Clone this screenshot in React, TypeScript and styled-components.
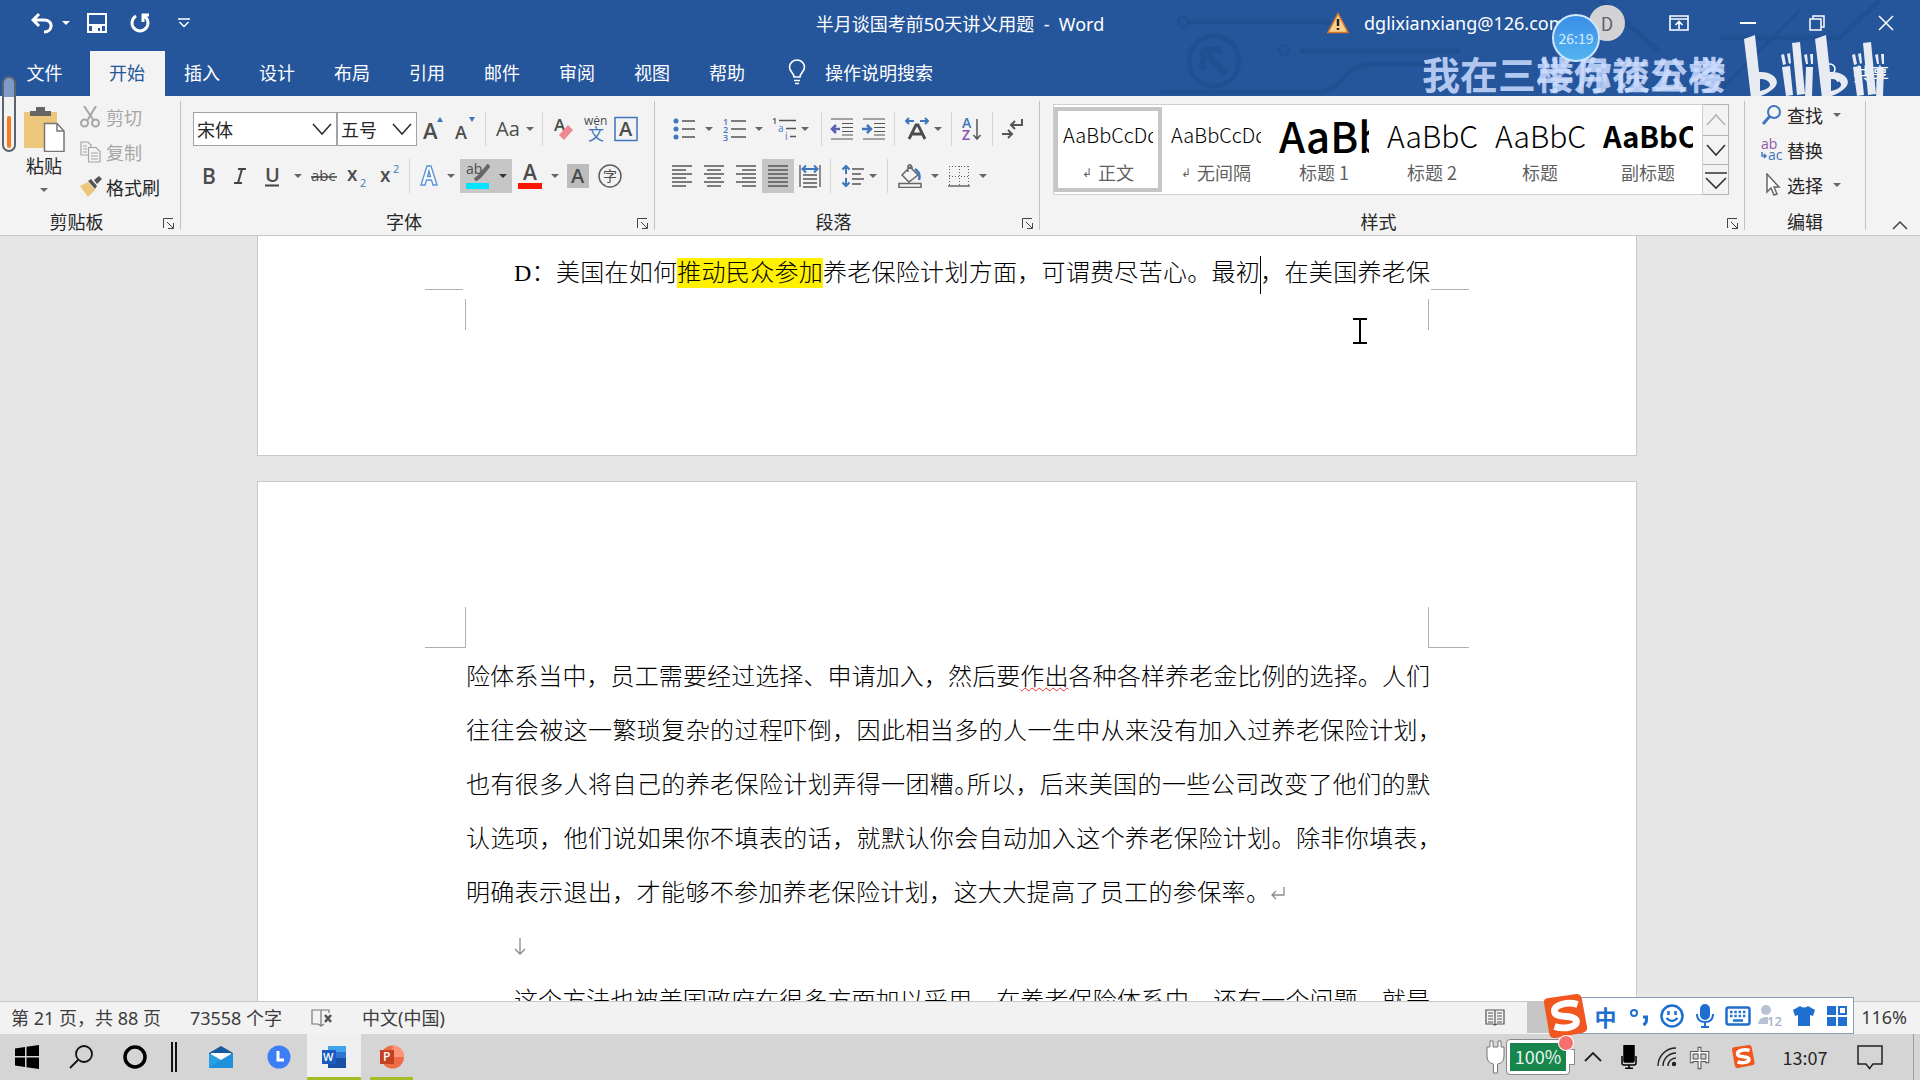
import React from "react";
import styled, { createGlobalStyle, css } from "styled-components";

const ui = `"Noto Sans", "Noto Sans CJK SC", sans-serif`;
const cjk = `"Noto Sans CJK SC", sans-serif`;
const blue = "#25569c";
const ink = "#262626";
const dim = "#5f5f5f";
const accent = "#3f76bd";

const Global = createGlobalStyle`
  * { box-sizing: border-box; }
  body { margin: 0; font-family: ${cjk}; font-size: 18px; color: ${ink}; overflow: hidden; }
  button, select { font: inherit; color: inherit; background: none; border: 0; padding: 0; margin: 0; }
  svg { display: block; flex: none; }
`;

const Window = styled.div`
  position: relative;
  display: grid;
  grid-template-rows: auto auto 1fr auto auto;
  height: 100vh;
`;

/* ---------- header ---------- */

const Header = styled.header`
  position: relative;
  background: ${blue};
  color: #fff;
  overflow: hidden;
`;
const Circuit = styled.svg`
  position: absolute;
  top: 0;
  right: 0;
`;
const TitleRow = styled.div`
  position: relative;
  display: grid;
  grid-template-columns: 1fr auto 1fr;
  align-items: center;
  height: 46px;
`;
const QuickAccess = styled.div`
  display: flex;
  align-items: center;
  padding-left: 28px;
`;
const QuickButton = styled.button<{ $w: number }>`
  width: ${(p) => p.$w}px;
  height: 40px;
  display: grid;
  place-items: center;
`;
const DocTitle = styled.h1`
  margin: 0;
  font-family: ${ui};
  font-size: 18px;
  font-weight: 400;
  white-space: pre;
`;
const Account = styled.div`
  display: flex;
  align-items: center;
  justify-content: flex-end;
`;
const Email = styled.a`
  width: 225px;
  margin-left: 15px;
  font-family: ${ui};
  color: #fff;
  text-decoration: none;
  white-space: nowrap;
`;
const Avatar = styled.button`
  width: 36px;
  height: 36px;
  margin-right: 19px;
  border-radius: 50%;
  background: #d3d2d4;
  color: #5b6270;
`;
const CaptionButton = styled.button`
  width: 69px;
  height: 40px;
  display: grid;
  place-items: center;
`;
const TabRow = styled.nav`
  position: relative;
  display: flex;
  align-items: flex-end;
  height: 50px;
`;
const Tab = styled.button<{ $active?: boolean; $first?: boolean }>`
  width: ${(p) => (p.$first ? 90 : 75)}px;
  height: 45px;
  padding: 0 1px 4px 0;
  ${(p) => p.$active && css`background: #f3f3f3; color: ${blue};`}
`;
const TellMe = styled.button`
  display: flex;
  align-items: center;
  gap: 19px;
  height: 45px;
  padding-bottom: 4px;
  margin-left: 23px;
`;
const Share = styled.button`
  display: flex;
  align-items: center;
  gap: 14px;
  height: 45px;
  padding-bottom: 2px;
  margin-left: auto;
  margin-right: 31px;
`;
const Watermark = styled.div`
  position: absolute;
  right: 194px;
  top: 46px;
  display: grid;
  justify-items: end;
  font-size: 38px;
  line-height: 54px;
  font-weight: 700;
  color: rgba(205, 221, 255, 0.85);
  span { grid-area: 1 / 1; }
`;
const Logo = styled.svg`
  position: absolute;
  right: 30px;
  top: 34px;
`;
const TimeBubble = styled.div`
  position: absolute;
  right: 320px;
  top: 14px;
  width: 48px;
  height: 48px;
  display: grid;
  place-items: center;
  border: 2px solid #cfe8fb;
  border-radius: 50%;
  background: linear-gradient(#3b8de6, #53b4f2);
  font-size: 14px;
  color: #d5edff;
`;

/* ---------- ribbon ---------- */

const Ribbon = styled.section`
  display: flex;
  height: 140px;
  background: #f3f3f3;
  border-bottom: 1px solid #c8c8c8;
`;
const Divider = styled.div`
  width: 1px;
  margin: 5px 0;
  background: #c2c2c2;
`;
const Group = styled.div<{ $w?: number }>`
  display: flex;
  flex-direction: column;
  justify-content: space-between;
  ${(p) => (p.$w ? css`width: ${p.$w}px;` : css`flex: 1;`)}
`;
const GroupFooter = styled.div`
  display: flex;
  align-items: center;
  height: 27px;
`;
const GroupLabel = styled.span`
  flex: 1;
  padding-bottom: 2px;
  text-align: center;
`;
const LauncherButton = styled.button`
  width: 27px;
  height: 27px;
  padding: 4px 0 0 10px;
`;
const Rows = styled.div<{ $pad: number }>`
  display: flex;
  flex-direction: column;
  gap: 13px;
  padding: 16px 0 0 ${(p) => p.$pad}px;
`;
const Row = styled.div`
  display: flex;
  height: 34px;
`;
const Tool = styled.button<{ $w?: number; $on?: boolean }>`
  width: ${(p) => p.$w ?? 32}px;
  height: 34px;
  display: grid;
  place-items: center;
  ${(p) => p.$on && css`background: #c6c6c6;`}
`;
const SplitTool = styled.button<{ $w: number; $gap?: number; $on?: boolean }>`
  width: ${(p) => p.$w}px;
  height: 34px;
  display: flex;
  align-items: center;
  gap: ${(p) => p.$gap ?? 9}px;
  padding-left: 6px;
  ${(p) => p.$on && css`background: #c6c6c6;`}
`;
const Sep = styled.div`
  width: 1px;
  margin: 0 4px;
  background: #d4d4d4;
`;
const Combo = styled.div<{ $w: number }>`
  position: relative;
  width: ${(p) => p.$w}px;
  margin-right: -1px;
  border: 1px solid #a3a3a3;
  background: #fff;
  select {
    width: 100%;
    height: 100%;
    padding-left: 3px;
    appearance: none;
  }
  svg {
    position: absolute;
    right: 4px;
    top: 9px;
    pointer-events: none;
  }
`;
const ComboGap = styled.div`
  width: 1px;
`;
const ClipboardBody = styled.div`
  display: flex;
  padding: 4px 0 0 13px;
`;
const PasteButton = styled.button`
  display: flex;
  flex-direction: column;
  align-items: center;
  width: 62px;
  padding: 6px 0 0 0;
  line-height: 26px;
  svg + span { margin-bottom: 10px; }
`;
const Stack = styled.div<{ $pad?: number }>`
  display: flex;
  flex-direction: column;
  padding-left: ${(p) => p.$pad ?? 0}px;
`;
const LabelTool = styled.button<{ $off?: boolean }>`
  display: flex;
  align-items: center;
  gap: 4px;
  height: 35px;
  padding-bottom: 2px;
  color: ${(p) => (p.$off ? "#a6a6a6" : ink)};
  span { margin-right: 6px; }
`;
const EditBody = styled.div`
  padding: 2px 0 0 16px;
`;
const GalleryWrap = styled.div`
  display: flex;
  height: 99px;
  padding: 8px 15px 0 13px;
`;
const Gallery = styled.div`
  display: flex;
  flex: 1;
  border: 1px solid #cfcfcf;
  background: #fff;
`;
const StyleCard = styled.button<{ $on?: boolean }>`
  display: flex;
  flex-direction: column;
  align-items: center;
  justify-content: space-between;
  width: 108px;
  margin: 2px 0;
  padding: 2px 5px 1px;
  border: 4px solid ${(p) => (p.$on ? "#c6c6c6" : "transparent")};
  color: ${dim};
`;
const Preview = styled.span<{ $size: number; $weight: number }>`
  width: 90px;
  height: 48px;
  line-height: 44px;
  overflow: hidden;
  text-align: left;
  white-space: nowrap;
  color: #000;
  font-size: ${(p) => p.$size}px;
  font-weight: ${(p) => p.$weight};
`;
const CardName = styled.span`
  display: flex;
  gap: 6px;
  line-height: 30px;
  white-space: nowrap;
  small { font-size: 12px; }
`;
const Scrollers = styled.div`
  display: grid;
  grid-template-rows: 1fr 1fr 1fr;
  width: 26px;
  border: 1px solid #b4b4b4;
  border-left: 0;
`;
const Scroller = styled.button`
  display: grid;
  place-items: center;
  & + & { border-top: 1px solid #b4b4b4; }
`;
const Collapse = styled.div`
  display: flex;
  width: 54px;
  justify-content: center;
  align-items: flex-end;
  padding: 0 0 5px 13px;
`;

/* ---------- document ---------- */

const Canvas = styled.main`
  position: relative;
  min-height: 0;
  overflow: hidden;
  background: #e6e6e6;
  display: flex;
  flex-direction: column;
  align-items: center;
  gap: 25px;
  padding-right: 26px;
`;
const Sheet = styled.article<{ $end?: boolean }>`
  flex: none;
  width: 1380px;
  border: 1px solid #c8c8c8;
  background: #fff;
  ${(p) => p.$end && css`border-top: 0; padding: 10px 0 125px;`}
  ${(p) => !p.$end && css`padding: 125px 0 0;`}
`;
const Body = styled.div<{ $top?: number }>`
  padding: 0 206px 0 208px;
  margin-top: ${(p) => p.$top ?? 0}px;
  font-family: "Liberation Serif", ${cjk};
  font-weight: 300;
  font-size: 24px;
  line-height: 54px;
  color: #000;
`;
const Paragraph = styled.p`
  margin: 0;
`;
const Line = styled.span<{ $indent?: boolean; $measure?: number }>`
  display: block;
  white-space: nowrap;
  text-align: justify;
  text-align-last: justify;
  padding-left: ${(p) => (p.$indent ? 48 : 0)}px;
  width: ${(p) => (p.$measure ? `${p.$measure}px` : "auto")};
`;
/* punctuation set on half a body where the line is tight */
const HalfStop = styled.span`
  font-feature-settings: "halt";
`;
const LastLine = styled.span`
  display: flex;
  align-items: center;
`;
const Mark = styled.mark`
  background: #fff100;
  color: inherit;
  padding: 2px 0;
`;
const Caret = styled.i`
  display: inline-block;
  width: 1px;
  height: 38px;
  margin-right: -1px;
  vertical-align: middle;
  background: #000;
`;
const Misspelt = styled.span`
  text-decoration: underline wavy #e03030 1px;
  text-underline-offset: 2px;
`;
const BreakRow = styled.div`
  display: flex;
  align-items: center;
  height: 54px;
  padding-left: 48px;
`;
const Crops = styled.div<{ $lift?: boolean }>`
  display: flex;
  justify-content: space-between;
  padding: 0 167px;
  margin-top: ${(p) => (p.$lift ? -11 : 0)}px;
`;
const TopCrop = styled.i<{ $right?: boolean }>`
  width: 41px;
  height: 41px;
  border-bottom: 1px solid #b0b0b0;
  ${(p) => (p.$right ? css`border-left: 1px solid #b0b0b0;` : css`border-right: 1px solid #b0b0b0;`)}
`;
const BottomCrop = styled.i<{ $right?: boolean }>`
  display: flex;
  flex-direction: column;
  justify-content: space-between;
  align-items: ${(p) => (p.$right ? "flex-start" : "flex-end")};
  width: 41px;
  height: 41px;
  &::before {
    content: "";
    width: 38px;
    height: 1px;
    align-self: ${(p) => (p.$right ? "flex-end" : "flex-start")};
    background: #b0b0b0;
  }
  &::after {
    content: "";
    width: 1px;
    height: 31px;
    background: #b0b0b0;
  }
`;
const Pointer = styled.svg`
  position: absolute;
  left: 1353px;
  top: 82px;
`;
const VolumePill = styled.div`
  position: absolute;
  left: 2px;
  top: 76px;
  width: 14px;
  height: 76px;
  padding: 2px;
  display: flex;
  align-items: flex-end;
  justify-content: center;
  border: 2px solid #5d6470;
  border-radius: 7px;
  background: linear-gradient(#7f9cc8 26%, #f3f3f3 27%);
  &::after {
    content: "";
    width: 4px;
    height: 32px;
    border-radius: 2px;
    background: #f47b20;
  }
`;

/* ---------- status bar and taskbar ---------- */

const StatusBar = styled.footer`
  position: relative;
  display: flex;
  align-items: center;
  height: 33px;
  padding: 0 13px 2px 11px;
  border-top: 1px solid #c8c8c8;
  background: #f2f2f2;
  font-family: ${ui};
  color: #3c3c3c;
`;
const StatusItem = styled.button`
  margin-right: 29px;
  white-space: nowrap;
`;
const ViewButton = styled.button<{ $on?: boolean }>`
  display: grid;
  place-items: center;
  width: 64px;
  height: 32px;
  background: ${(p) => (p.$on ? "#c6c6c6" : "none")};
`;
const Zoom = styled.button`
  margin-left: 270px;
`;
const Push = styled.div`
  flex: 1;
`;
const ImeBar = styled.div`
  position: absolute;
  right: 66px;
  bottom: 0;
  display: flex;
  height: 37px;
  padding-left: 32px;
  border: 1px solid #8c9cb4;
  background: #fff;
  color: #1f6fd0;
  font-weight: 700;
  font-size: 22px;
`;
const ImeLogo = styled.svg`
  position: absolute;
  left: -15px;
  top: -4px;
`;
const ImeButton = styled.button`
  display: grid;
  place-items: center;
  width: 33px;
`;
const Taskbar = styled.div`
  display: flex;
  align-items: stretch;
  height: 46px;
  background: #d5d5d5;
`;
const Task = styled.button<{ $w: number; $running?: boolean; $front?: boolean; $gap?: number }>`
  display: grid;
  place-items: center;
  width: ${(p) => p.$w}px;
  margin-left: ${(p) => p.$gap ?? 0}px;
  border-top: 3px solid transparent;
  border-bottom: 3px solid ${(p) => (p.$running ? "#a3bd26" : "transparent")};
  background: ${(p) => (p.$front ? "#efefef" : "none")};
`;
const Bars = styled.i`
  width: 6px;
  margin: 8px 12px 8px 9px;
  border: solid #111;
  border-width: 0 2px;
`;
const Battery = styled.div`
  position: relative;
  display: flex;
  align-items: center;
  align-self: center;
  width: 68px;
`;
const BatteryBody = styled.span`
  width: 62px;
  height: 34px;
  border: 3px solid #fff;
  border-radius: 3px;
  outline: 1px solid #8a8a8a;
  background: #17854c;
  color: #e8f7ee;
  line-height: 26px;
  text-align: center;
`;
const BatteryNub = styled.i`
  width: 6px;
  height: 16px;
  border: 1px solid #8a8a8a;
  border-left: 0;
  background: #fff;
`;
const Badge = styled.i`
  position: absolute;
  right: 2px;
  top: -4px;
  width: 14px;
  height: 14px;
  border-radius: 50%;
  background: #f4706c;
  box-shadow: 0 0 0 1px #fff;
`;
const ImeState = styled.button`
  width: 23px;
  padding-bottom: 2px;
  font-size: 22px;
  font-weight: 700;
  color: #fff;
  -webkit-text-stroke: 1px #555;
`;
const DesktopEdge = styled.i`
  width: 1px;
  margin: 0 6px 0 8px;
  background: #9c9c9c;
`;

/* ---------- drawings ---------- */

type SvgProps = { w: number; h: number; c?: string; sw?: number; children: React.ReactNode };
const Svg = ({ w, h, c = dim, sw = 1.5, children }: SvgProps) => (
  <svg width={w} height={h} viewBox={`0 0 ${w} ${h}`} fill="none" stroke={c} strokeWidth={sw} aria-hidden="true">
    {children}
  </svg>
);
const Down = ({ c = "#666" }: { c?: string }) => (
  <Svg w={8} h={4} c="none"><path d="M0 0H8L4 4Z" fill={c} /></Svg>
);
const Chevron = ({ up, c = "#333", w = 20 }: { up?: boolean; c?: string; w?: number }) => (
  <Svg w={w} h={14} c={c} sw={1.6}>
    <path d={up ? `M1 12L${w / 2} 2L${w - 1} 12` : `M1 2L${w / 2} 12L${w - 1} 2`} />
  </Svg>
);
const Lines = ({ rows }: { rows: [number, number][] }) => (
  <Svg w={22} h={22} c="#555">
    {rows.map(([a, b], i) => <path key={i} d={`M${a} ${1 + i * 4}H${b}`} />)}
  </Svg>
);
const T = ({ x, y, s, f = "#4c4c4c", b, children }: { x: number; y: number; s: number; f?: string; b?: boolean; children: string }) => (
  <text x={x} y={y} fontSize={s} fill={f} stroke="none" fontWeight={b ? 600 : 400} fontFamily='"Open Sans", "Noto Sans CJK SC", sans-serif'>
    {children}
  </text>
);
const Launcher = ({ name }: { name: string }) => (
  <LauncherButton aria-label={name}>
    <Svg w={11} h={11} c="#444" sw={1}><path d="M.5 10V.5H10M4 4l6 6M10.500 5v5.500H5" /></Svg>
  </LauncherButton>
);
const Sogou = ({ s }: { s: number }) => (
  <g transform={`scale(${s / 44})`} stroke="none">
    <path d="M2 9Q1 5 5 4L33 0Q37 0 38 4L43 31Q44 36 39 37L13 42Q8 43 7 38Z" fill="#f0561d" />
    <path d="M34 10C25 7 11 10 12 17C13 24 32 19 33 26C33 32 21 34 12 31" fill="none" stroke="#fff" strokeWidth="6.500" />
  </g>
);

const tabs = ["文件", "开始", "插入", "设计", "布局", "引用", "邮件", "审阅", "视图", "帮助"];
const styleCards = [
  { name: "正文", linked: true, text: "AaBbCcDd", size: 20, weight: 300 },
  { name: "无间隔", linked: true, text: "AaBbCcDd", size: 20, weight: 300 },
  { name: "标题 1", text: "AaBb", size: 42, weight: 500 },
  { name: "标题 2", text: "AaBbC", size: 30, weight: 300 },
  { name: "标题", text: "AaBbC", size: 30, weight: 300 },
  { name: "副标题", text: "AaBbC", size: 29, weight: 700 },
];

const TitleBar = () => (
  <Header>
    <Circuit width="760" height="96" viewBox="0 0 760 96" fill="none" stroke="#1e4a87" strokeWidth="5" opacity="0.45" aria-hidden="true">
      <circle cx="23" cy="22" r="5" strokeWidth="3" /><path d="M29 22H170M140 51H300M0 92H160C190 88 175 66 215 64H330M440 0L500 52M560 38H680L720 0" />
      <circle cx="124" cy="50" r="5" strokeWidth="3" />
      <circle cx="54" cy="61" r="25" /><path d="M42 50H62M43 50V70M44 51L66 74" strokeWidth="7" />
      <path d="M560 90L640 10" strokeWidth="3" />
    </Circuit>
    <TitleRow>
      <QuickAccess>
        <QuickButton $w={28} aria-label="撤消">
          <Svg w={22} h={22} c="#fff" sw={3}><path d="M2 8H13C23 8 22 20 13 20M8 2L2 8L8 14" /></Svg>
        </QuickButton>
        <QuickButton $w={20} aria-label="撤消选项"><Down c="#fff" /></QuickButton>
        <QuickButton $w={42} aria-label="保存">
          <Svg w={20} h={20} c="#fff" sw={2}><path d="M1 1H19V19H1ZM1 12H19M6 19V14H14V19" /><path d="M7 15h3v4h-3z" fill="#fff" /></Svg>
        </QuickButton>
        <QuickButton $w={44} aria-label="重复">
          <Svg w={22} h={22} c="#fff" sw={3}><path d="M7 4A8 8 0 1 0 15 4M20 3H14V10" /></Svg>
        </QuickButton>
        <QuickButton $w={44} aria-label="自定义快速访问工具栏">
          <Svg w={12} h={10} c="#fff"><path d="M0 1H12M1.500 4L6 8.500L10.500 4" /></Svg>
        </QuickButton>
      </QuickAccess>
      <DocTitle>半月谈国考前50天讲义用题  -  Word</DocTitle>
      <Account>
        <Svg w={22} h={22} c="#d9762b" sw={1.5}>
          <path d="M11 1.500L21 20.500H1Z" fill="#f9d08a" /><path d="M11 7V14M11 16V18" stroke="#222" strokeWidth="2.500" />
        </Svg>
        <Email href="#account">dglixianxiang@126.com</Email>
        <Avatar>D</Avatar>
        <CaptionButton aria-label="功能区显示选项">
          <Svg w={20} h={16} c="#fff" sw={1.6}><path d="M1 1H19V15H1ZM1 4H19M10 14V7M6.500 10L10 6.500L13.500 10" /></Svg>
        </CaptionButton>
        <CaptionButton aria-label="最小化"><Svg w={16} h={2} c="#fff" sw={2}><path d="M0 1H16" /></Svg></CaptionButton>
        <CaptionButton aria-label="还原">
          <Svg w={16} h={16} c="#fff"><path d="M1 4H12V15H1ZM4 4V1H15V12H12" /></Svg>
        </CaptionButton>
        <CaptionButton aria-label="关闭"><Svg w={16} h={16} c="#fff"><path d="M1 1L15 15M15 1L1 15" /></Svg></CaptionButton>
      </Account>
    </TitleRow>
    <TabRow>
      {tabs.map((t, i) => <Tab key={t} $first={i === 0} $active={i === 1}>{t}</Tab>)}
      <TellMe>
        <Svg w={18} h={26} c="#fff" sw={1.6}>
          <path d="M6 18C6 14 1.500 13 1.500 8A7.500 7 0 0 1 16.500 8C16.500 13 12 14 12 18ZM6 21.500H12M7 24.500H11" />
        </Svg>
        操作说明搜索
      </TellMe>
      <Share>
        <Svg w={18} h={20} c="#fff"><circle cx="9" cy="6" r="5" /><path d="M1 19C2 13 16 13 17 19" /></Svg>
        共享
      </Share>
    </TabRow>
    <Watermark><span>我在三楼你在五楼</span><span>半月谈公考</span></Watermark>
    <Logo width="146" height="64" viewBox="0 0 146 64" fill="#e9ebf2" aria-hidden="true">
      <path d="M0 5L11 1L15 38C28 37 38 46 30 54C24 60 16 63 7 64Z M16 45V57Q27 54 26 50Q24 45 16 45Z" fillRule="evenodd" />
      <path d="M38 33L46 32L49 61L42 62ZM48 9L56 8L61 60L53 61ZM62 33L69 33L68 62L61 62Z" />
      <path d="M37 21L40 20L42 30L39 31ZM43 20L46 19L47 29L45 30ZM60 21L63 20L64 30L62 30ZM66 20L69 20L69 30L67 30Z" />
      <path d="M71 5L82 1L86 38C99 37 109 46 101 54C95 60 87 63 78 64Z M87 45V57Q98 54 97 50Q95 45 87 45Z" fillRule="evenodd" />
      <path d="M109 33L117 32L120 61L113 62ZM119 9L127 8L132 60L124 61ZM133 33L140 33L139 62L132 62Z" />
      <path d="M108 21L111 20L113 30L110 31ZM114 20L117 19L118 29L116 30ZM131 21L134 20L135 30L133 30ZM137 20L140 20L140 30L138 30Z" />
    </Logo>
    <TimeBubble>26:19</TimeBubble>
  </Header>
);

const ClipboardGroup = () => (
  <Group $w={180}>
    <ClipboardBody>
      <PasteButton>
        <Svg w={42} h={46} c="none">
          <path d="M1 6H34V42H1Z" fill="#ecc67a" /><path d="M7 5H13V1H22V5H28V10H7Z" fill="#656565" />
          <path d="M21.500 17.500H34L41 25V45.500H21.500Z" fill="#fff" stroke="#777" /><path d="M34 17.500V25H41" stroke="#777" />
        </Svg>
        <span>粘贴</span>
        <Down />
      </PasteButton>
      <Stack $pad={5}>
        <LabelTool $off disabled>
          <Svg w={22} h={22} c="#a6a6a6" sw={2}>
            <path d="M4 0L14 15M16 0L7 15" /><circle cx="4.500" cy="17" r="3.500" /><circle cx="15.500" cy="17" r="3.500" />
          </Svg>
          <span>剪切</span>
        </LabelTool>
        <LabelTool $off disabled>
          <Svg w={22} h={22} c="#a6a6a6" sw={1.2}>
            <path d="M8 14H1V1H8L11 4V6M8.500 6.500H16L20 10.500V21H8.500ZM3 5H7M3 8H7M3 11H7M11 12H18M11 15H18M11 18H18" />
          </Svg>
          <span>复制</span>
        </LabelTool>
        <LabelTool>
          <Svg w={22} h={22} c="none">
            <path d="M0 10L8 6L15 14L8 21Z" fill="#ecc67a" /><path d="M8 5L11 3L17 10L15 13Z" fill="#555" /><path d="M14 4L19 0L22 3L17 8Z" fill="#555" />
          </Svg>
          <span>格式刷</span>
        </LabelTool>
      </Stack>
    </ClipboardBody>
    <GroupFooter><GroupLabel>剪贴板</GroupLabel><Launcher name="剪贴板选项" /></GroupFooter>
  </Group>
);

const FontGroup = () => (
  <Group $w={473}>
    <Rows $pad={12}>
      <Row>
        <Combo $w={144}><select aria-label="字体"><option>宋体</option></select><Chevron /></Combo>
        <ComboGap />
        <Combo $w={80}><select aria-label="字号"><option>五号</option></select><Chevron /></Combo>
        <ComboGap />
        <Tool aria-label="增大字号"><Svg w={20} h={24}><T x={0} y={22} s={22} b>A</T><path d="M14 5L17 0L20 5Z" fill={accent} stroke="none" /></Svg></Tool>
        <Tool aria-label="减小字号"><Svg w={20} h={24}><T x={0} y={22} s={18} b>A</T><path d="M14 0L17 5L20 0Z" fill={accent} stroke="none" /></Svg></Tool>
        <Sep />
        <SplitTool $w={48} $gap={4} aria-label="更改大小写"><Svg w={26} h={22}><T x={0} y={18} s={20}>Aa</T></Svg><Down /></SplitTool>
        <Sep />
        <Tool $w={34} aria-label="清除格式">
          <Svg w={20} h={24}><T x={0} y={14} s={17} b>A</T><path d="M5 18L14 8L19 13L10 23Z" fill="#ee8895" stroke="none" /></Svg>
        </Tool>
        <Tool $w={30} aria-label="拼音指南"><Svg w={24} h={26}><T x={0} y={9} s={12}>wén</T><T x={4} y={24} s={16} f={accent}>文</T></Svg></Tool>
        <Tool $w={30} aria-label="字符边框"><Svg w={24} h={26} c={accent}><path d="M1 1.500H23V24.500H1Z" /><T x={5} y={20} s={20} b>A</T></Svg></Tool>
      </Row>
      <Row>
        <Tool aria-label="加粗"><Svg w={16} h={20}><T x={1} y={18} s={21} b>B</T></Svg></Tool>
        <Tool $w={30} aria-label="倾斜"><Svg w={14} h={20} c="#444" sw={2}><path d="M5 3H13M1 17H9M9 3L5 17" /></Svg></Tool>
        <SplitTool $w={54} aria-label="下划线"><Svg w={24} h={24} c="#444"><T x={4} y={18} s={20} b>U</T><path d="M4 21.500H18" strokeWidth="2" /></Svg><Down /></SplitTool>
        <Tool $w={30} aria-label="删除线"><Svg w={26} h={20} c="#444"><T x={0} y={15} s={15}>abc</T><path d="M0 11H26" /></Svg></Tool>
        <Tool $w={36} aria-label="下标"><Svg w={20} h={24}><T x={0} y={17} s={19} b>x</T><T x={13} y={23} s={11} f={accent}>2</T></Svg></Tool>
        <Tool $w={30} aria-label="上标"><Svg w={20} h={24}><T x={0} y={18} s={19} b>x</T><T x={13} y={9} s={11} f={accent}>2</T></Svg></Tool>
        <Sep />
        <SplitTool $w={46} aria-label="文本效果">
          <Svg w={18} h={22} c="#5b93d6" sw={1.4}><path d="M1 20L7 1H11L17 20H13L11.500 15H6.500L5 20ZM7.500 11.500H10.500L9 6Z" fill="#fff" /></Svg><Down />
        </SplitTool>
        <SplitTool $w={52} $on aria-label="文本突出显示颜色">
          <Svg w={24} h={26}><T x={0} y={11} s={14}>ab</T><path d="M23 2L14 13L9 17" stroke="#666" strokeWidth="4" /><path d="M0 20H23V26H0Z" fill="#00e5ff" stroke="none" /></Svg><Down c="#333" />
        </SplitTool>
        <SplitTool $w={50} aria-label="字体颜色">
          <Svg w={24} h={26}><T x={5} y={17} s={21} b>A</T><path d="M0 20H24V26H0Z" fill="#fd1300" stroke="none" /></Svg><Down />
        </SplitTool>
        <Tool aria-label="字符底纹"><Svg w={22} h={24}><path d="M0 0H22V24H0Z" fill="#bdbdbd" stroke="none" /><T x={4} y={19} s={20} b>A</T></Svg></Tool>
        <Tool aria-label="带圈字符"><Svg w={24} h={24}><circle cx="12" cy="12" r="11" /><T x={5} y={17} s={14}>字</T></Svg></Tool>
      </Row>
    </Rows>
    <GroupFooter><GroupLabel>字体</GroupLabel><Launcher name="字体选项" /></GroupFooter>
  </Group>
);

const Indent = ({ left }: { left?: boolean }) => (
  <Svg w={24} h={22} c="#555" sw={1.2}>
    <path d="M1 1H23M12 5.500H23M12 9.500H23M12 13.500H23M1 21H23M12 17H23" />
    <path d={left ? "M10 11H2M6 7L2 11L6 15" : "M0 11H8M5 7L9 11L5 15"} stroke={left ? "#5a5fb5" : accent} strokeWidth="2.500" />
  </Svg>
);

const ParagraphGroup = () => (
  <Group $w={384}>
    <Rows $pad={11}>
      <Row>
        <SplitTool $w={50} aria-label="项目符号">
          <Svg w={24} h={22} c="#555">
            {[3, 11, 19].map((y) => <g key={y}><circle cx="4" cy={y} r="2.500" fill={accent} stroke="none" /><path d={`M10 ${y}H23`} /></g>)}
          </Svg><Down />
        </SplitTool>
        <SplitTool $w={50} aria-label="编号">
          <Svg w={24} h={24} c="#555">
            {["1", "2", "3"].map((n, i) => <g key={n}><T x={1} y={8 + i * 8} s={9} f={accent} b>{n}</T><path d={`M9 ${4 + i * 8}H24`} /></g>)}
          </Svg><Down />
        </SplitTool>
        <SplitTool $w={51} $gap={5} aria-label="多级列表">
          <Svg w={24} h={24} c="#555">
            <T x={0} y={7} s={9} b>1</T><T x={6} y={15} s={10} f={accent}>a</T><T x={13} y={23} s={10} f={accent}>i</T><path d="M7 3.500H24M14 11.500H24M18 19.500H24" />
          </Svg><Down />
        </SplitTool>
        <Sep />
        <Tool aria-label="减少缩进量"><Indent left /></Tool>
        <Tool aria-label="增加缩进量"><Indent /></Tool>
        <Sep />
        <SplitTool $w={48} $gap={5} aria-label="中文版式">
          <Svg w={24} h={24} c={accent} sw={2}><path d="M9 4H1M4 1L1 4L4 7M15 4H23M20 1L23 4L20 7" /><path d="M4 22L11 8H13L20 22M7.500 17H16.500" stroke="#4c4c4c" strokeWidth="2.800" /></Svg><Down />
        </SplitTool>
        <Sep />
        <Tool aria-label="排序">
          <Svg w={20} h={24} c="#555"><T x={0} y={11} s={14} f={accent} b>A</T><T x={0} y={23} s={14} f="#8a4fb0" b>Z</T><path d="M15 2V22M11.500 18L15 22L18.500 18" /></Svg>
        </Tool>
        <Sep />
        <Tool aria-label="显示编辑标记"><Svg w={22} h={22} c="#555" sw={2}><path d="M20 1V7H10M13 3L9 7L13 11M0 16H9M6 12L10 16L6 20" /></Svg></Tool>
      </Row>
      <Row>
        <Tool aria-label="左对齐"><Lines rows={[[1, 21], [1, 15], [1, 21], [1, 15], [1, 21], [1, 15]]} /></Tool>
        <Tool aria-label="居中"><Lines rows={[[1, 21], [4, 18], [1, 21], [4, 18], [1, 21], [4, 18]]} /></Tool>
        <Tool aria-label="右对齐"><Lines rows={[[1, 21], [7, 21], [1, 21], [7, 21], [1, 21], [7, 21]]} /></Tool>
        <Tool $on aria-label="两端对齐"><Lines rows={[[1, 21], [1, 21], [1, 21], [1, 21], [1, 21], [1, 21]]} /></Tool>
        <Tool aria-label="分散对齐">
          <Svg w={22} h={24} c="#555" sw={1.3}><path d="M1 1V23M21 1V23M4 11H18M4 15H18M4 19H18M4 23H18" /><path d="M4 5H18M7 1.500L3.500 5L7 8.500M15 1.500L18.500 5L15 8.500" stroke={accent} strokeWidth="2" /></Svg>
        </Tool>
        <Sep />
        <SplitTool $w={48} $gap={4} aria-label="行距">
          <Svg w={24} h={24} c="#555"><path d="M11 5H23M11 10H20M11 15H23M11 20H20" /><path d="M5 2V10M1.500 5.500L5 2L8.500 5.500M5 14V22M1.500 18.500L5 22L8.500 18.500" stroke={accent} strokeWidth="2" /></Svg><Down />
        </SplitTool>
        <Sep />
        <SplitTool $w={50} aria-label="底纹">
          <Svg w={24} h={24} c="#666"><path d="M12 3L20 11L11 18L4 11ZM10 8V2Q12 -1 14 3V6M1 19.500H23V23.500H1Z" /><path d="M17 5Q23 9 21 16" stroke={accent} strokeWidth="2.500" /></Svg><Down />
        </SplitTool>
        <SplitTool $w={50} aria-label="边框">
          <Svg w={22} h={22} c="#666" sw={1}><path d="M1 1.500H21M1 11.500H21M1.500 1V20M11.500 1V20M20.500 1V20" strokeDasharray="1 2" /><path d="M0 21H22" strokeWidth="1.500" /></Svg><Down />
        </SplitTool>
      </Row>
    </Rows>
    <GroupFooter><GroupLabel>段落</GroupLabel><Launcher name="段落选项" /></GroupFooter>
  </Group>
);

const StylesGroup = () => (
  <Group>
    <GalleryWrap>
      <Gallery>
        {styleCards.map((s, i) => (
          <StyleCard key={s.name} $on={i === 0}>
            <Preview $size={s.size} $weight={s.weight}>{s.text}</Preview>
            <CardName>{s.linked && <small>↲</small>}{s.name}</CardName>
          </StyleCard>
        ))}
      </Gallery>
      <Scrollers>
        <Scroller aria-label="上一行"><Chevron up c="#b4b4b4" /></Scroller>
        <Scroller aria-label="下一行"><Chevron /></Scroller>
        <Scroller aria-label="其他样式"><Svg w={22} h={20} c="#333" sw={1.6}><path d="M0 3H22M1 8L11 18L21 8" /></Svg></Scroller>
      </Scrollers>
    </GalleryWrap>
    <GroupFooter><GroupLabel>样式</GroupLabel><Launcher name="样式选项" /></GroupFooter>
  </Group>
);

const EditGroup = () => (
  <Group $w={120}>
    <EditBody>
      <Stack>
        <LabelTool>
          <Svg w={22} h={20} c={accent} sw={2}><circle cx="13" cy="7" r="6" /><path d="M9 11L2 19" strokeWidth="3" /></Svg>
          <span>查找</span><Down />
        </LabelTool>
        <LabelTool>
          <Svg w={22} h={24} c={accent}><T x={0} y={11} s={14} f="#8a5aa8">ab</T><T x={7} y={22} s={14} f={accent}>ac</T><path d="M1 14V18H5M3 16L5 18L3 20" /></Svg>
          <span>替换</span>
        </LabelTool>
        <LabelTool>
          <Svg w={22} h={24} c="#666"><path d="M6 1V19L10 15L13 22L16 21L13 14H18Z" fill="#fff" /></Svg>
          <span>选择</span><Down />
        </LabelTool>
      </Stack>
    </EditBody>
    <GroupFooter><GroupLabel>编辑</GroupLabel></GroupFooter>
  </Group>
);

export default function App() {
  return (
    <Window>
      <Global />
      <TitleBar />
      <Ribbon>
        <ClipboardGroup />
        <Divider />
        <FontGroup />
        <Divider />
        <ParagraphGroup />
        <Divider />
        <StylesGroup />
        <Divider />
        <EditGroup />
        <Divider />
        <Collapse><button aria-label="折叠功能区"><Svg w={16} h={10} c="#444"><path d="M1 9L8 2L15 9" /></Svg></button></Collapse>
      </Ribbon>

      <Canvas>
        <Sheet $end>
          <Body>
            <Paragraph>
              <Line $indent>
                D：美国在如何<Mark>推动民众参加</Mark>养老保险计划方面，可谓费尽苦心。最初<Caret />，在美国养老保
              </Line>
            </Paragraph>
          </Body>
          <Crops $lift><BottomCrop /><BottomCrop $right /></Crops>
        </Sheet>
        <Sheet>
          <Crops><TopCrop /><TopCrop $right /></Crops>
          <Body $top={2}>
            <Paragraph>
              <Line>险体系当中，员工需要经过选择、申请加入，然后要<Misspelt>作出</Misspelt>各种各样养老金比例的选择。人们</Line>
              <Line>往往会被这一繁琐复杂的过程吓倒，因此相当多的人一生中从来没有加入过养老保险计划<HalfStop>，</HalfStop></Line>
              <Line>也有很多人将自己的养老保险计划弄得一团糟<HalfStop>。</HalfStop>所以，后来美国的一些公司改变了他们的默</Line>
              <Line>认选项，他们说如果你不填表的话，就默认你会自动加入这个养老保险计划。除非你填表<HalfStop>，</HalfStop></Line>
              <LastLine>
                <Line $measure={804}>明确表示退出，才能够不参加养老保险计划，这大大提高了员工的参保率。</Line>
                <Svg w={16} h={14} c="#8a8a8a" sw={1.3}><path d="M14 1V9H2M6 5L2 9L6 13" /></Svg>
              </LastLine>
            </Paragraph>
            <BreakRow><Svg w={12} h={18} c="#8a8a8a" sw={1.3}><path d="M6 0V16M1 11L6 16L11 11" /></Svg></BreakRow>
            <Paragraph>
              <Line $indent>这个方法也被美国政府在很多方面加以采用，在养老保险体系中，还有一个问题，就是</Line>
            </Paragraph>
          </Body>
        </Sheet>
        <Pointer width="14" height="26" viewBox="0 0 14 26" fill="none" stroke="#000" strokeWidth="2" aria-hidden="true">
          <path d="M0 1H14M0 25H14M7 1V25" />
        </Pointer>
      </Canvas>

      <StatusBar>
        <StatusItem>第 21 页，共 88 页</StatusItem>
        <StatusItem>73558 个字</StatusItem>
        <StatusItem aria-label="校对错误">
          <Svg w={22} h={20} c="#777" sw={1.2}><path d="M10 3V19M10 3H1V17H7L10 19L13 17M10 3H18V6" /><path d="M14 8L20 15M20 8L14 15" stroke="#555" strokeWidth="2.500" /></Svg>
        </StatusItem>
        <StatusItem>中文(中国)</StatusItem>
        <Push />
        <ViewButton aria-label="阅读视图">
          <Svg w={20} h={18} c="#555" sw={1.2}><path d="M10 2V17M10 2H1V16H8L10 17L12 16H19V2ZM3 5H8M3 8H8M3 11H8M3 14H8M12 5H17M12 8H17M12 11H17M12 14H17" /></Svg>
        </ViewButton>
        <ViewButton $on aria-label="页面视图"><Svg w={18} h={20} c="#555"><path d="M1 1H17V19H1ZM4 6H14M4 10H14M4 14H14" /></Svg></ViewButton>
        <Zoom>116%</Zoom>
        <ImeBar>
          <ImeLogo width="46" height="46" viewBox="0 0 46 46" aria-hidden="true"><Sogou s={46} /></ImeLogo>
          <ImeButton>中</ImeButton>
          <ImeButton aria-label="中文标点"><Svg w={20} h={22} c="#1f6fd0" sw={2}><circle cx="5" cy="8" r="3" /><path d="M14 12h3.500v3q0 3 -3 5" strokeWidth="3" /></Svg></ImeButton>
          <ImeButton aria-label="表情"><Svg w={24} h={24} c="#1f6fd0" sw={2.500}><circle cx="12" cy="12" r="10.500" /><path d="M8.500 7V11M15.500 7V11M6.500 14Q12 20 17.500 14" /></Svg></ImeButton>
          <ImeButton aria-label="语音"><Svg w={20} h={24} c="#1f6fd0" sw={2}><rect x="6" y="1" width="8" height="14" rx="4" fill="#1f6fd0" /><path d="M2 10Q2 18 10 18Q18 18 18 10M10 18V23M6 23H14" /></Svg></ImeButton>
          <ImeButton aria-label="软键盘"><Svg w={26} h={20} c="#1f6fd0" sw={2.500}><rect x="1.500" y="1.500" width="23" height="17" rx="2" /><path d="M5 6H21M5 10H21" strokeDasharray="2.500 1.800" /><path d="M8 14.500H18" /></Svg></ImeButton>
          <ImeButton aria-label="登录"><Svg w={26} h={24} c="none"><circle cx="8" cy="6" r="5" fill="#b9c2d4" /><path d="M0 20Q1 12 10 13V20Z" fill="#b9c2d4" /><T x={9} y={22} s={13} f="#a9b4c8" b>12</T></Svg></ImeButton>
          <ImeButton aria-label="皮肤"><Svg w={22} h={22} c="none"><path d="M0 5L7 1Q11 4 15 1L22 5L20 11L17 10V21H5V10L2 11Z" fill="#1f6fd0" /></Svg></ImeButton>
          <ImeButton aria-label="工具箱"><Svg w={20} h={20} c="#1f6fd0" sw={2}><path d="M0 0H9V9H0ZM0 11H9V20H0ZM11 11H20V20H11Z" fill="#1f6fd0" stroke="none" /><path d="M12 1H19V8H12Z" /></Svg></ImeButton>
        </ImeBar>
      </StatusBar>

      <Taskbar>
        <Task $w={54} aria-label="开始菜单"><Svg w={24} h={24} c="none"><path d="M0 3.500L10 2V11H0ZM11.500 1.800L24 0V11H11.500ZM0 12.500H10V22L0 20.500ZM11.500 12.500H24V24L11.500 22.200Z" fill="#000" /></Svg></Task>
        <Task $w={54} aria-label="搜索"><Svg w={24} h={24} c="#111" sw={1.8}><circle cx="15" cy="9" r="8" /><path d="M9 15L1 23" /></Svg></Task>
        <Task $w={54} aria-label="语音助手"><Svg w={24} h={24} c="#000" sw={3.500}><circle cx="12" cy="12" r="10" /></Svg></Task>
        <Bars />
        <Task $w={58} $gap={3} aria-label="邮件">
          <Svg w={24} h={22} c="none"><path d="M0 7L12 0L24 7V11H0Z" fill="#15599e" /><path d="M2 7H22V14L12 17L2 14Z" fill="#fff" /><path d="M0 7L12 14L24 7V22H0Z" fill="#27a0e4" /><path d="M0 22L14 13L24 7V22Z" fill="#1b86d4" opacity="0.6" /></Svg>
        </Task>
        <Task $w={57} aria-label="日程"><Svg w={24} h={24} c="none"><circle cx="12" cy="12" r="11.500" fill="#3d7ef5" /><path d="M11 6V15H17" stroke="#fff" strokeWidth="3" /></Svg></Task>
        <Task $w={54} $running $front aria-label="Word">
          <Svg w={24} h={24} c="none"><path d="M6 1H24V23H6Z" fill="#2f74d0" /><path d="M6 1H24V7H6Z" fill="#41a5ee" /><path d="M6 13H24V23H6Z" fill="#1a4fa8" /><path d="M0 5H14V19H0Z" fill="#1b5cbe" /><T x={1} y={16} s={11} f="#fff" b>W</T></Svg>
        </Task>
        <Task $w={43} $gap={9} $running aria-label="PowerPoint">
          <Svg w={24} h={24} c="none"><circle cx="12.500" cy="12" r="11.500" fill="#ee6c47" /><path d="M12.500 .5A11.500 11.500 0 0 1 24 12H12.500Z" fill="#ff9478" /><path d="M0 5H14V19H0Z" fill="#c5401f" /><T x={3} y={16} s={12} f="#fff" b>P</T></Svg>
        </Task>
        <Push />
        <Svg w={23} h={44} c="#777" sw={1}><path d="M6 7H9V13H14V7H17V13H20V22Q20 29 13.500 30V39H9.500V30Q3 29 3 22V13H6Z" fill="#fff" /></Svg>
        <Battery><BatteryBody>100%</BatteryBody><BatteryNub /><Badge /></Battery>
        <Task $w={36} aria-label="显示隐藏的图标"><Svg w={18} h={10} c="#222" sw={1.8}><path d="M1 9L9 1L17 9" /></Svg></Task>
        <Task $w={35} aria-label="麦克风"><Svg w={16} h={24} c="#000"><rect x="3" y="0" width="10" height="17" rx="1" fill="#000" /><path d="M1 11V18Q1 20 3 20H13Q15 20 15 18V11M8 20V23M4 23.200H12" /></Svg></Task>
        <Task $w={42} aria-label="网络"><Svg w={20} h={20} c="#222" sw={1.4}><path d="M1 19A18 18 0 0 1 19 1M6 19A13 13 0 0 1 19 6M11 19A8 8 0 0 1 19 11" /><circle cx="17" cy="17" r="1.500" fill="#222" /></Svg></Task>
        <ImeState>中</ImeState>
        <Task $w={64} aria-label="搜狗输入法"><Svg w={24} h={24} c="none"><Sogou s={24} /></Svg></Task>
        <Task $w={60}>13:07</Task>
        <Task $w={70} aria-label="通知"><Svg w={26} h={26} c="#222"><path d="M1 2H25V20H16L12.500 24.500L9 20H1Z" /></Svg></Task>
        <DesktopEdge />
      </Taskbar>
      <VolumePill />
    </Window>
  );
}
